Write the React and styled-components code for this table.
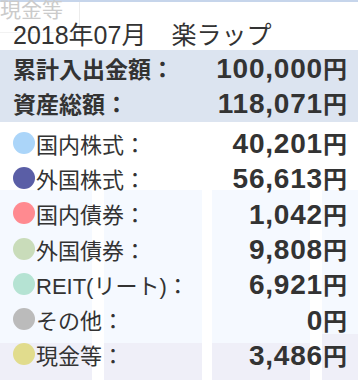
import React from "react";
import styled, { createGlobalStyle } from "styled-components";

const Global = createGlobalStyle`
  html, body { margin: 0; padding: 0; background: #fff; }
  body { font-family: "Liberation Sans", "Noto Sans CJK JP", sans-serif; color: #333; }
`;

const Stage = styled.div`
  position: relative;
  width: 358px;
  height: 380px;
  overflow: hidden;
  background: #fff;
`;

const Chart = styled.div`
  position: absolute;
  inset: 0;
  display: flex;
  flex-direction: column;
`;

const TopBand = styled.div`
  height: 2px;
  background: #c6d5eb;
`;

const GhostLegend = styled.div`
  display: flex;
  align-items: flex-start;
  height: 31px;
  width: 80px;
  border-right: 1px solid #ececec;
  border-bottom: 1px solid #f2f2f2;
  box-sizing: border-box;
`;

const GhostText = styled.span`
  font-size: 21px;
  line-height: 21px;
  margin-top: -4px;
  color: #cbcbcb;
  font-family: "Noto Sans CJK JP", sans-serif;
`;

const Bars = styled.div`
  margin-top: auto;
  display: flex;
  align-items: flex-end;
  height: 190px;
`;

const Bar = styled.div`
  display: flex;
  flex-direction: column;
  width: ${(p) => p.$w}px;
  margin-left: ${(p) => p.$ml}px;
  height: 100%;
`;

const BarTop = styled.div`
  flex: 1;
  background: #f5f9ff;
`;

const BarBottom = styled.div`
  height: ${(p) => p.$h}px;
  background: #efeff8;
`;

const Tooltip = styled.div`
  position: absolute;
  left: 0;
  top: 15px;
  width: 358px;
  display: flex;
  flex-direction: column;
`;

const Title = styled.div`
  height: 35px;
  display: flex;
  align-items: center;
  padding-left: 13px;
  font-size: 25px;
  color: #333;
  white-space: pre;
`;

const Summary = styled.div`
  background: #dce4f0;
  padding-bottom: 2px;
  display: flex;
  flex-direction: column;
`;

const Row = styled.div`
  height: ${(p) => p.$h || 35}px;
  display: flex;
  align-items: center;
  padding: 0 11px 0 13px;
`;

const BoldLabel = styled.span`
  font-size: 23px;
  font-weight: bold;
  color: #333;
`;

const Label = styled.span`
  font-size: 22px;
  color: #333;
  margin-left: 1px;
`;

const Value = styled.span`
  margin-left: auto;
  font-size: 28px;
  font-weight: bold;
  color: #333;
  letter-spacing: 0.8px;
`;

const Yen = styled.span`
  font-size: 24px;
  letter-spacing: 0;
`;

const Dot = styled.span`
  width: 22px;
  height: 22px;
  border-radius: 50%;
  background: ${(p) => p.$c};
  flex: none;
`;

const List = styled.div`
  margin-top: 3px;
  display: flex;
  flex-direction: column;
`;

const items = [
  { c: "#abd5f9", l: "国内株式：", v: "40,201" },
  { c: "#5a5ea6", l: "外国株式：", v: "56,613" },
  { c: "#ff8a90", l: "国内債券：", v: "1,042" },
  { c: "#c9dcba", l: "外国債券：", v: "9,808" },
  { c: "#b5e3d3", l: "REIT(リート)：", v: "6,921" },
  { c: "#bbbbbb", l: "その他：", v: "0" },
  { c: "#e1dc8d", l: "現金等：", v: "3,486" },
];

const bars = [
  { w: 92, ml: 0, h: 37 },
  { w: 98, ml: 12, h: 37 },
  { w: 98, ml: 10, h: 37 },
  { w: 36, ml: 12, h: 46 },
];

export default function App() {
  return (
    <Stage>
      <Global />
      <Chart>
        <TopBand />
        <GhostLegend>
          <GhostText>現金等</GhostText>
        </GhostLegend>
        <Bars>
          {bars.map((b, i) => (
            <Bar key={i} $w={b.w} $ml={b.ml}>
              <BarTop />
              <BarBottom $h={b.h} />
            </Bar>
          ))}
        </Bars>
      </Chart>
      <Tooltip>
        <Title>2018年07月　楽ラップ</Title>
        <Summary>
          <Row>
            <BoldLabel>累計入出金額：</BoldLabel>
            <Value>
              100,000<Yen>円</Yen>
            </Value>
          </Row>
          <Row>
            <BoldLabel>資産総額：</BoldLabel>
            <Value>
              118,071<Yen>円</Yen>
            </Value>
          </Row>
        </Summary>
        <List>
          {items.map((it) => (
            <Row key={it.l} $h={35.3}>
              <Dot $c={it.c} />
              <Label>{it.l}</Label>
              <Value>
                {it.v}
                <Yen>円</Yen>
              </Value>
            </Row>
          ))}
        </List>
      </Tooltip>
    </Stage>
  );
}
